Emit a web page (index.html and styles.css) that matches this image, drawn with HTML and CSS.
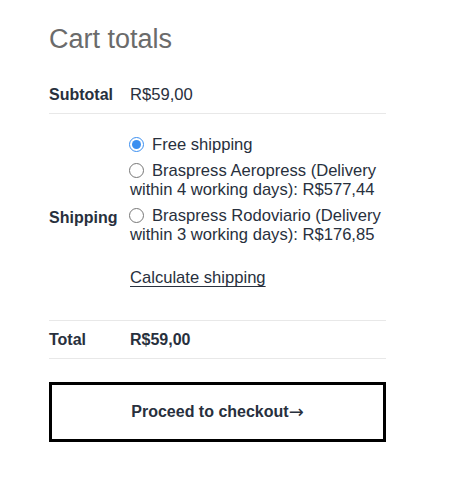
FILE: index.html
```html
<!DOCTYPE html>
<html lang="en">
<head>
<meta charset="utf-8">
<title>Cart totals</title>
<link rel="stylesheet" href="styles.css">
</head>
<body>
<div class="cart-totals">
  <h2 class="title">Cart totals</h2>
  <table class="totals">
    <tr class="row row-subtotal">
      <th>Subtotal</th>
      <td>R$59,00</td>
    </tr>
    <tr class="row row-shipping">
      <th>Shipping</th>
      <td>
        <ul class="methods">
          <li class="method"><input type="radio" name="ship" checked>Free shipping</li>
          <li class="method"><input type="radio" name="ship">Braspress Aeropress (Delivery within 4 working days): R$577,44</li>
          <li class="method"><input type="radio" name="ship">Braspress Rodoviario (Delivery within 3 working days): R$176,85</li>
        </ul>
        <a class="calc" href="#">Calculate shipping</a>
      </td>
    </tr>
    <tr class="row row-total">
      <th>Total</th>
      <td><strong>R$59,00</strong></td>
    </tr>
  </table>
  <a class="checkout" href="#">Proceed to checkout<span class="arrow">→</span></a>
</div>
</body>
</html>
```
FILE: styles.css
```css
html, body {
  margin: 0;
  padding: 0;
  background: #fff;
}
body {
  font-family: "Liberation Sans", Arial, sans-serif;
  font-size: 16px;
  color: #28303d;
}
.cart-totals {
  width: 337px;
  padding: 22px 0 0 49px;
}
.title {
  margin: 0 0 20px;
  font-size: 27px;
  font-weight: 300;
  line-height: 34px;
  color: #6b6b6b;
}
.totals {
  width: 100%;
  border-collapse: collapse;
}
.row {
  border-bottom: 1px solid #e8e8e8;
}
.row-total {
  border-top: 1px solid #e8e8e8;
}
.row th {
  width: 81px;
  padding: 9px 0;
  text-align: left;
  font-weight: 800;
  line-height: 19px;
  vertical-align: middle;
}
.row td {
  padding: 9px 0;
  font-size: 16.6px;
  line-height: 19px;
  vertical-align: middle;
}
.row-shipping td {
  padding: 21px 0 33px;
}
.methods {
  list-style: none;
  margin: 0 0 24px;
  padding: 0;
}
.method {
  margin-bottom: 7px;
}
.method:last-child {
  margin-bottom: 0;
}
.method input {
  margin: 0 8px 0 -1px;
  width: 15px;
  height: 15px;
  vertical-align: -2px;
  accent-color: #3b8ff0;
}
.calc {
  color: #28303d;
  text-decoration: underline;
  text-underline-offset: 3px;
}
.row-total td strong {
  font-size: 16px;
  font-weight: 800;
}
.checkout {
  display: flex;
  justify-content: center;
  align-items: center;
  margin-top: 23px;
  height: 54px;
  border: 3px solid #000;
  color: #28303d;
  font-weight: 800;
  text-decoration: none;
}
.arrow {
  font-family: "DejaVu Sans", sans-serif;
  font-weight: 400;
  font-size: 18px;
  line-height: 1;
}
```
